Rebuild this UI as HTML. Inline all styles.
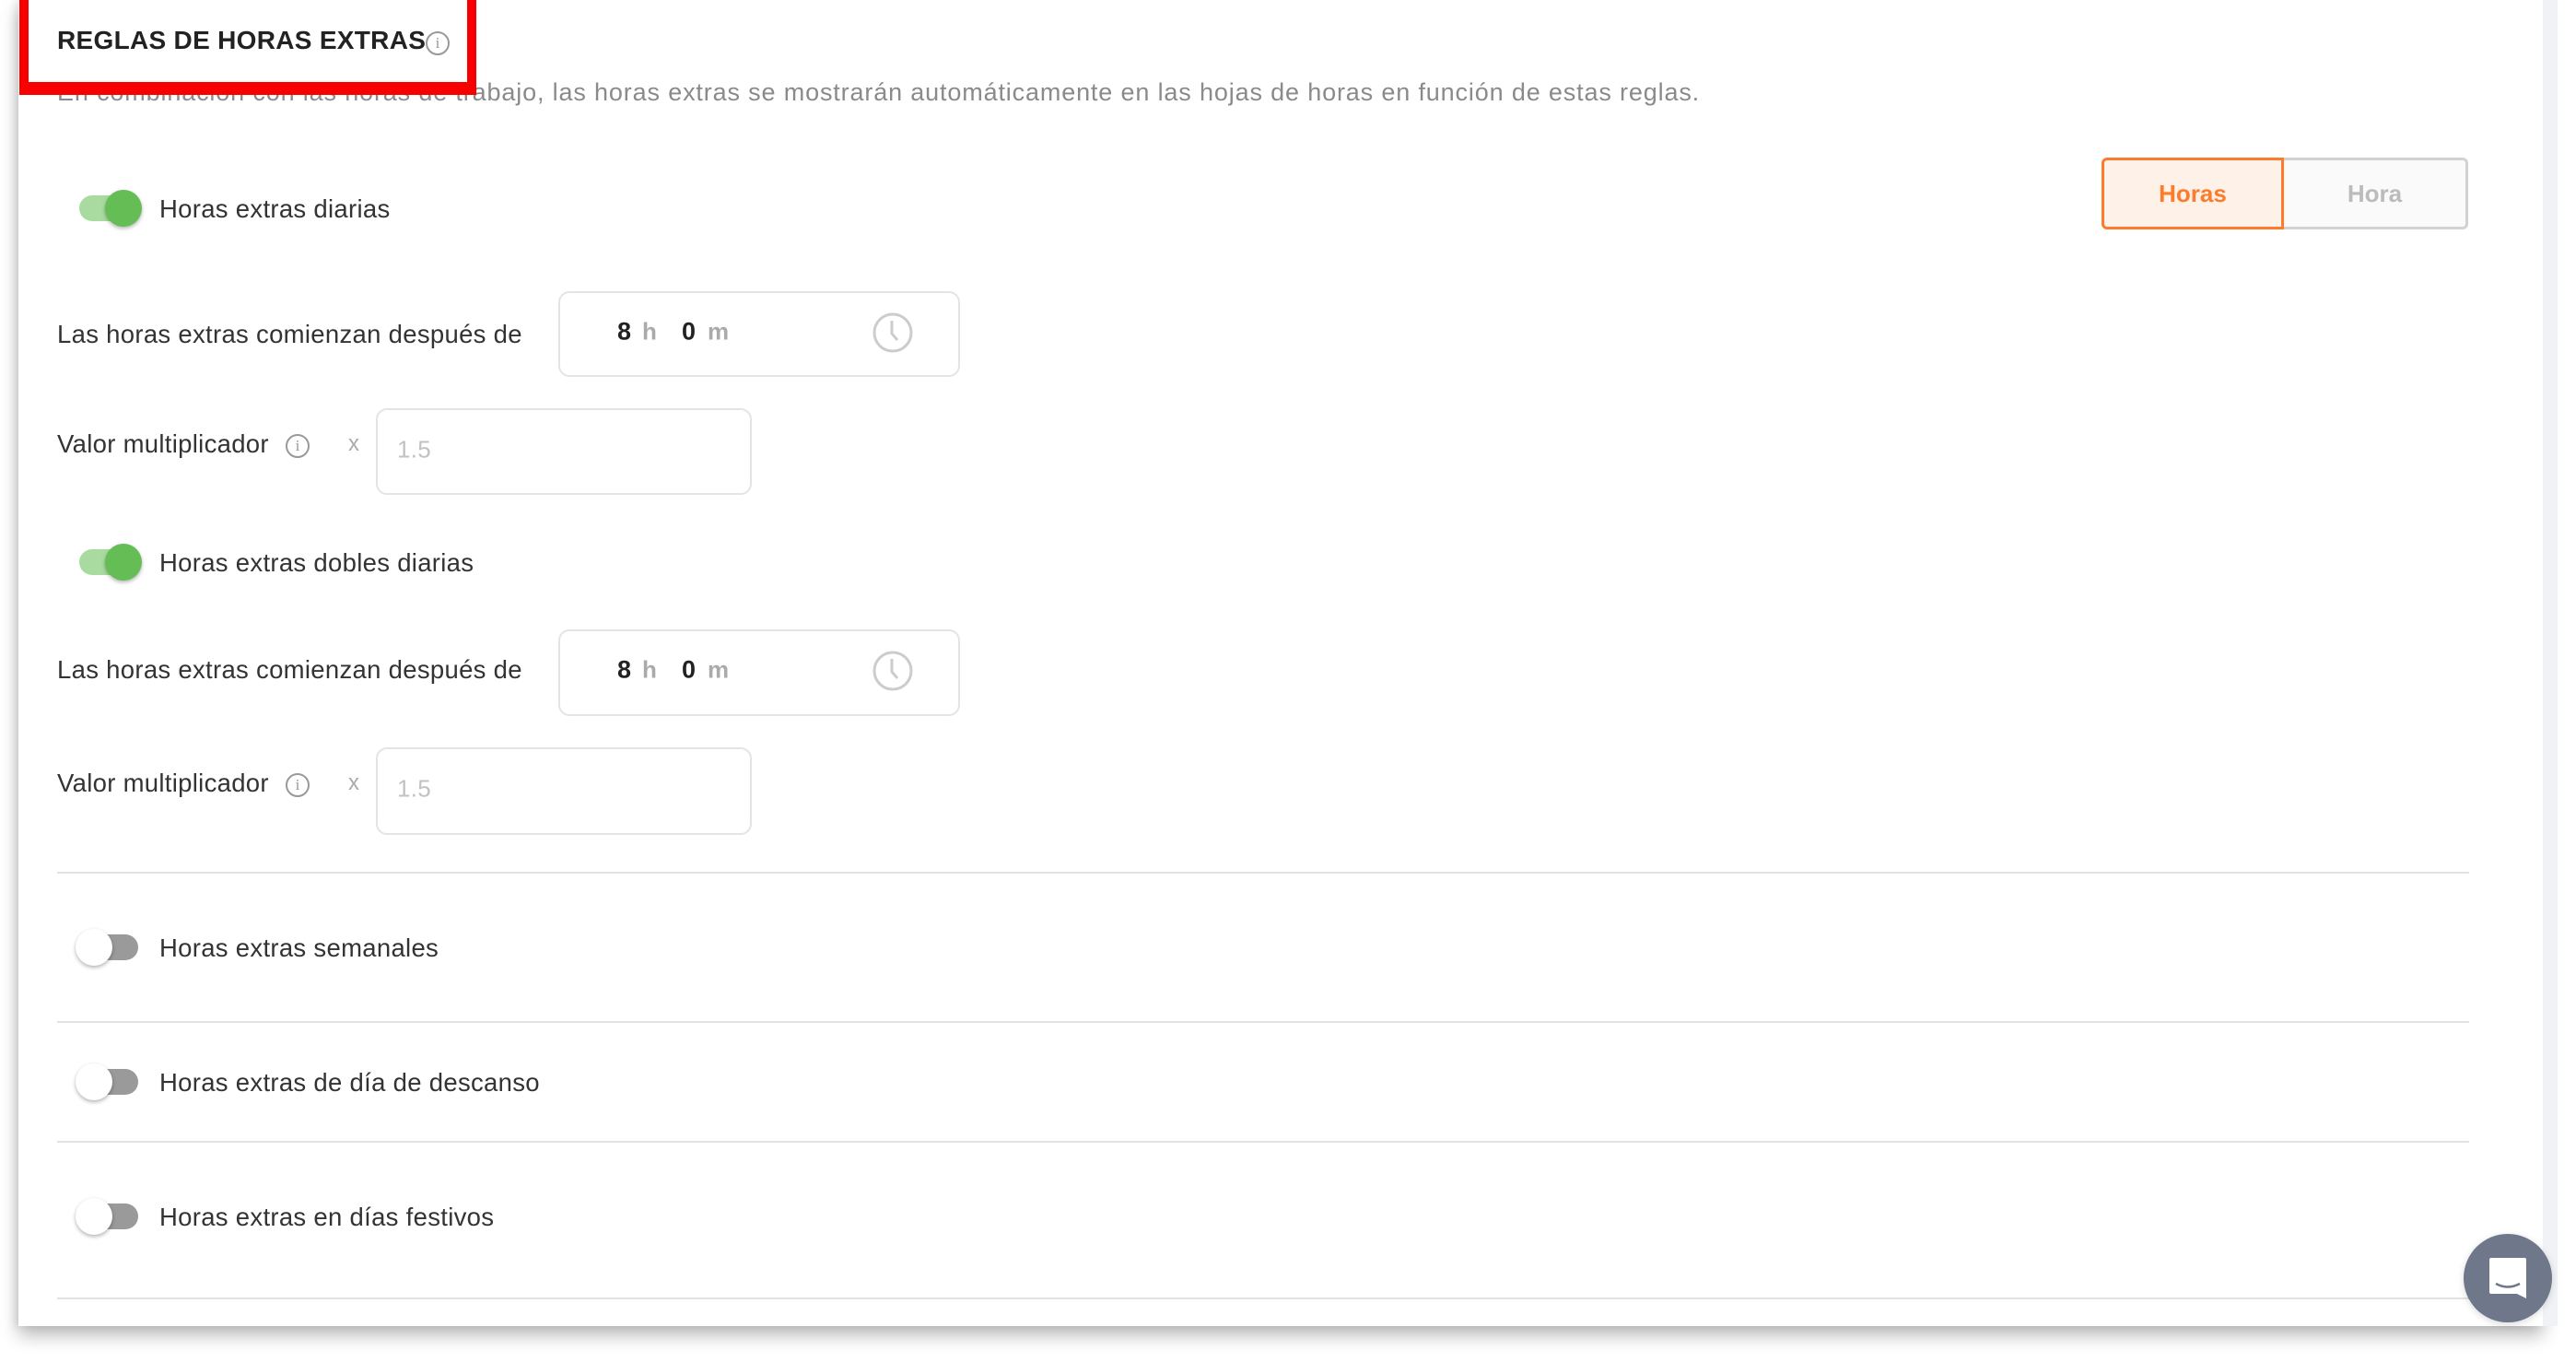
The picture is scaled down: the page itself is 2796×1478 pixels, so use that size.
<!DOCTYPE html>
<html><head><meta charset="utf-8"><style>
*{margin:0;padding:0;box-sizing:border-box}
body{width:2796px;height:1478px;background:#fff;font-family:"Liberation Sans",sans-serif;position:relative;overflow:hidden;color:#333}
.card{position:absolute;left:20px;top:0;width:2740px;height:1439px;background:#fff;box-shadow:0 10px 18px rgba(0,0,0,.28),-4px 0 8px rgba(0,0,0,.08)}
.strip{position:absolute;left:2760px;top:0;width:16px;height:1439px;background:#f0f2f6}
.a{position:absolute;white-space:nowrap}
.lbl{font-size:27.5px;letter-spacing:0.3px;color:#333;transform:translateY(-50%)}
.info{position:absolute;width:26px;height:26px;border:2px solid #999;border-radius:50%;color:#999;font-size:17px;line-height:22px;text-align:center;font-family:"Liberation Serif",serif}
.tgl{position:absolute;width:68px;height:42px}
.tgl .tr{position:absolute;left:0;top:7px;width:66px;height:28px;border-radius:14px}
.tgl .kn{position:absolute;top:1px;width:40px;height:40px;border-radius:50%;box-shadow:0 2px 4px rgba(0,0,0,.3)}
.on .tr{background:#a9dba1;left:-2px}.on .kn{background:#65bd55;left:26px}
.off .tr{background:#9a9a9a;left:16px;width:52px}.off .kn{background:#fff;left:0}
.inp{position:absolute;border:2px solid #e4e4e4;border-radius:12px;background:#fff}
.hr{position:absolute;left:62px;width:2618px;height:2px;background:#e2e2e2}
.n{position:absolute;font-size:27px;font-weight:bold;color:#222;transform:translateY(-50%)}
.u{position:absolute;font-size:26px;font-weight:bold;color:#aaa;transform:translateY(-50%)}
</style></head><body>
<div class="card"></div><div class="strip"></div>

<div class="a" style="left:62px;top:28px;font-size:28px;letter-spacing:0.3px;font-weight:bold;color:#222">REGLAS DE HORAS EXTRAS</div>
<div class="info" style="left:462px;top:34px">i</div>
<div class="a" style="left:62px;top:85px;font-size:27px;letter-spacing:0.85px;color:#8a8a8a">En combinación con las horas de trabajo, las horas extras se mostrarán automáticamente en las hojas de horas en función de estas reglas.</div>
<div style="position:absolute;left:21px;top:-10px;width:496px;height:113px;border:10px solid #f60000;border-bottom-width:14px"></div>

<!-- segmented -->
<div style="position:absolute;left:2281px;top:171px;width:198px;height:78px;border:3px solid #fd7b2b;border-radius:6px 0 0 6px;background:#fdf1e8;color:#fd7b2b;font-weight:bold;font-size:26px;text-align:center;line-height:72px">Horas</div>
<div style="position:absolute;left:2479px;top:171px;width:200px;height:78px;border:3px solid #d2d2d2;border-left:none;border-radius:0 6px 6px 0;background:#fafafa;color:#bbb;font-weight:bold;font-size:26px;text-align:center;line-height:72px">Hora</div>

<!-- block 1 -->
<div class="tgl on" style="left:88px;top:205px"><div class="tr"></div><div class="kn"></div></div>
<div class="a lbl" style="left:173px;top:227px">Horas extras diarias</div>
<div class="a lbl" style="left:62px;top:363px">Las horas extras comienzan después de</div>
<div class="inp" style="left:606px;top:316px;width:436px;height:93px"></div>
<div class="n" style="left:670px;top:360px">8</div><div class="u" style="left:697px;top:360px">h</div>
<div class="n" style="left:740px;top:360px">0</div><div class="u" style="left:768px;top:360px">m</div>
<svg class="a" style="left:946px;top:338px" width="46" height="46" viewBox="0 0 46 46"><circle cx="23" cy="23" r="20" fill="none" stroke="#ccc" stroke-width="3"/><path d="M22 10v14l6 7" fill="none" stroke="#ccc" stroke-width="3"/></svg>
<div class="a lbl" style="left:62px;top:482px">Valor multiplicador</div>
<div class="info" style="left:310px;top:471px">i</div>
<div class="a lbl" style="left:378px;top:482px;color:#aaa;font-size:24px">x</div>
<div class="inp" style="left:408px;top:443px;width:408px;height:94px"></div>
<div class="a lbl" style="left:431px;top:488px;color:#c2c2c2;font-size:26px">1.5</div>

<!-- block 2 -->
<div class="tgl on" style="left:88px;top:589px"><div class="tr"></div><div class="kn"></div></div>
<div class="a lbl" style="left:173px;top:611px">Horas extras dobles diarias</div>
<div class="a lbl" style="left:62px;top:727px">Las horas extras comienzan después de</div>
<div class="inp" style="left:606px;top:683px;width:436px;height:94px"></div>
<div class="n" style="left:670px;top:727px">8</div><div class="u" style="left:697px;top:727px">h</div>
<div class="n" style="left:740px;top:727px">0</div><div class="u" style="left:768px;top:727px">m</div>
<svg class="a" style="left:946px;top:705px" width="46" height="46" viewBox="0 0 46 46"><circle cx="23" cy="23" r="20" fill="none" stroke="#ccc" stroke-width="3"/><path d="M22 10v14l6 7" fill="none" stroke="#ccc" stroke-width="3"/></svg>
<div class="a lbl" style="left:62px;top:850px">Valor multiplicador</div>
<div class="info" style="left:310px;top:839px">i</div>
<div class="a lbl" style="left:378px;top:850px;color:#aaa;font-size:24px">x</div>
<div class="inp" style="left:408px;top:811px;width:408px;height:95px"></div>
<div class="a lbl" style="left:431px;top:856px;color:#c2c2c2;font-size:26px">1.5</div>

<div class="hr" style="top:946px"></div>
<div class="tgl off" style="left:82px;top:1007px"><div class="tr"></div><div class="kn"></div></div>
<div class="a lbl" style="left:173px;top:1029px">Horas extras semanales</div>
<div class="hr" style="top:1108px"></div>
<div class="tgl off" style="left:82px;top:1153px"><div class="tr"></div><div class="kn"></div></div>
<div class="a lbl" style="left:173px;top:1175px">Horas extras de día de descanso</div>
<div class="hr" style="top:1238px"></div>
<div class="tgl off" style="left:82px;top:1299px"><div class="tr"></div><div class="kn"></div></div>
<div class="a lbl" style="left:173px;top:1321px">Horas extras en días festivos</div>
<div class="hr" style="top:1408px"></div>

<!-- chat -->
<div style="position:absolute;left:2674px;top:1339px;width:96px;height:96px;border-radius:50%;background:#6f778a;box-shadow:0 2px 8px rgba(0,0,0,.15)"></div>
<svg class="a" style="left:2700px;top:1363px" width="44" height="50" viewBox="0 0 44 50"><path d="M4 2h36a2 2 0 0 1 2 2v42l-10-5H4a2 2 0 0 1-2-2V4a2 2 0 0 1 2-2z" fill="#fff"/><path d="M9 30q13 7 26 0" fill="none" stroke="#6f778a" stroke-width="2.5"/></svg>
</body></html>
